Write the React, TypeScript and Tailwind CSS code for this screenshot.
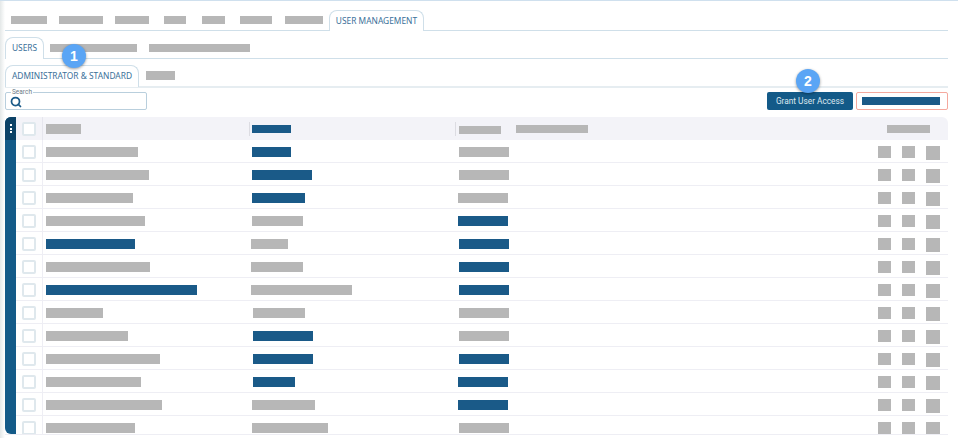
import { Search } from "lucide-react";

const BLUE = "#1a5a88";
const GREY = "#b7b7b7";

// [bar start, bar end, blue?]
type Bar = [number, number, boolean];

const rows: { name: Bar; email: Bar; role: Bar }[] = [
  { name: [46, 138, false], email: [252, 291, true], role: [459, 509, false] },
  { name: [46, 149, false], email: [252, 312, true], role: [459, 509, false] },
  { name: [46, 133, false], email: [252, 305, true], role: [458, 508, false] },
  { name: [46, 145, false], email: [252, 303, false], role: [458, 508, true] },
  { name: [46, 135, true], email: [251, 288, false], role: [459, 509, true] },
  { name: [46, 150, false], email: [251, 303, false], role: [459, 509, true] },
  { name: [46, 197, true], email: [251, 352, false], role: [459, 509, true] },
  { name: [46, 103, false], email: [253, 305, false], role: [459, 509, false] },
  { name: [46, 128, false], email: [253, 313, true], role: [459, 509, false] },
  { name: [46, 160, false], email: [253, 313, true], role: [459, 509, true] },
  { name: [46, 141, false], email: [253, 295, true], role: [458, 508, true] },
  { name: [46, 162, false], email: [252, 315, false], role: [458, 508, true] },
  { name: [46, 135, false], email: [252, 328, false], role: [459, 509, false] },
];

function Redacted({ w, blue = false, h = 10 }: { w: number; blue?: boolean; h?: number }) {
  return <div className="shrink-0" style={{ width: w, height: h, backgroundColor: blue ? BLUE : GREY }} />;
}

function Tab({ children, className = "" }: { children: React.ReactNode; className?: string }) {
  return (
    <div
      className={`flex items-center justify-center rounded-t-[8px] border border-b-0 border-[#cfdfe9] bg-white font-['Noto_Sans',sans-serif] text-[8.4px] whitespace-nowrap text-[#3a7099] ${className}`}
    >
      {children}
    </div>
  );
}

function Checkbox() {
  return <div className="h-[14px] w-[14px] rounded-[2px] border-2 border-[#dfe8ed] bg-white" />;
}

function Row({ row }: { row: (typeof rows)[number] }) {
  return (
    <div className="flex h-[23px] shrink-0 items-center border-b border-[#eeeef4] bg-white">
      <div className="flex h-full w-[27px] shrink-0 items-center justify-center border-r border-[#eeeef4] pt-[2px]">
        <Checkbox />
      </div>
      <div className="flex w-[206px] shrink-0 items-center pt-[2px]" style={{ paddingLeft: row.name[0] - 43 }}>
        <Redacted w={row.name[1] - row.name[0]} blue={row.name[2]} />
      </div>
      <div className="flex w-[206px] shrink-0 items-center pt-[2px]" style={{ paddingLeft: row.email[0] - 249 }}>
        <Redacted w={row.email[1] - row.email[0]} blue={row.email[2]} />
      </div>
      <div className="flex grow items-center pt-[2px]" style={{ paddingLeft: row.role[0] - 455 }}>
        <Redacted w={row.role[1] - row.role[0]} blue={row.role[2]} />
      </div>
      <div className="flex items-center gap-[11px] pt-[2px] pr-[8px]">
        <Redacted w={13} h={12} />
        <Redacted w={13} h={12} />
        <div className="pt-[2px]"><Redacted w={14} h={14} /></div>
      </div>
    </div>
  );
}

export default function App() {
  return (
    <div className="relative h-[438px] w-[958px] overflow-hidden border-t border-[#cfe0ee] bg-white font-['Roboto',sans-serif]">
      {/* soft shadow down the left edge */}
      <div className="absolute top-0 bottom-0 left-0 w-[5px] bg-gradient-to-r from-[#e4e8e8] to-white" />

      <div className="relative flex flex-col pr-[10px] pl-[5px]">
        {/* ── TOP TABS ─────────────────────────────────────────── */}
        <div className="mt-[9px] flex h-[21px] items-center border-b border-[#cfdfe9] pl-[6px]">
          <div className="flex items-center gap-[12px]">
            <Redacted w={36} h={8} />
            <Redacted w={44} h={8} />
            <Redacted w={34} h={8} />
          </div>
          <div className="ml-[15px]"><Redacted w={22} h={8} /></div>
          <div className="ml-[16px]"><Redacted w={23} h={8} /></div>
          <div className="ml-[15px]"><Redacted w={32} h={8} /></div>
          <div className="ml-[13px]"><Redacted w={38} h={8} /></div>
          <Tab className="ml-[6px] h-[21px] w-[95px] self-start">USER MANAGEMENT</Tab>
        </div>

        {/* ── SUB TABS ─────────────────────────────────────────── */}
        <div className="mt-[6px] flex h-[22px] items-center border-b border-[#cfdfe9]">
          <Tab className="h-[22px] w-[39px] self-start">USERS</Tab>
          <div className="ml-[6px]"><Redacted w={87} h={8} /></div>
          <div className="ml-[12px]"><Redacted w={101} h={8} /></div>
        </div>

        {/* ── ROLE TABS ────────────────────────────────────────── */}
        <div className="mt-[6px] flex h-[23px] items-center border-b-2 border-[#e6edf1]">
          <Tab className="h-[22px] w-[134px] self-start">ADMINISTRATOR &amp; STANDARD</Tab>
          <div className="ml-[7px]"><Redacted w={29} h={9} /></div>
        </div>

        {/* ── TOOLBAR ──────────────────────────────────────────── */}
        <div className="mt-[4px] flex h-[18px] items-stretch">
          <div className="relative flex w-[142px] items-center rounded-[2px] border border-[#b9cfdd] pl-[4px]">
            <span className="absolute top-[-4px] left-[5px] bg-white px-[1px] text-[6.5px] leading-[7px] text-[#6d7b85]">Search</span>
            <Search size={12} strokeWidth={3.5} className="mt-[2px] text-[#1a5a88]" />
          </div>
          <button className="ml-auto flex w-[86px] items-center justify-center rounded-[2px] bg-[#135a88] text-[8.3px] text-[#dfe9f0]">
            Grant User Access
          </button>
          <div className="ml-[3px] flex w-[92px] items-center justify-center rounded-[2px] border border-[#f5a99e] pr-[2px]">
            <Redacted w={78} h={8} blue />
          </div>
        </div>

        {/* ── TABLE ────────────────────────────────────────────── */}
        <div className="mt-[7px] flex h-[318px] overflow-hidden rounded-tr-[6px] border-b border-[#eeeef4]">
          <div className="flex w-[11px] shrink-0 flex-col overflow-hidden rounded-tl-[6px] rounded-bl-[6px] bg-[#135a88]">
            <div className="flex h-[23px] flex-col items-center justify-center gap-[1.5px] bg-[#0c4266]">
              <span className="h-[2px] w-[2px] bg-white" />
              <span className="h-[2px] w-[2px] bg-white" />
              <span className="h-[2px] w-[2px] bg-white" />
            </div>
          </div>
          <div className="flex grow flex-col">
            <div className="flex h-[23px] shrink-0 items-center bg-[#f3f3f8]">
              <div className="flex h-full w-[27px] shrink-0 items-center justify-center border-r border-[#e6e6ee]">
                <Checkbox />
              </div>
              <div className="flex h-full w-[206px] shrink-0 items-center pt-[1px] pl-[3px]">
                <Redacted w={35} />
              </div>
              <div className="flex h-[14px] w-[206px] shrink-0 items-center border-l border-[#dcdce2] pl-[2px]">
                <Redacted w={39} h={8} blue />
              </div>
              <div className="flex h-[14px] grow items-center gap-[15px] border-l border-[#dcdce2] pl-[3px]">
                <div className="mt-[3px]"><Redacted w={42} h={8} /></div>
                <div className="mt-[1px]"><Redacted w={72} h={8} /></div>
              </div>
              <div className="mt-[1px] pr-[18px]"><Redacted w={43} h={8} /></div>
            </div>
            {rows.map((row, i) => (
              <Row key={i} row={row} />
            ))}
          </div>
        </div>
      </div>

      {/* ── CALLOUT BADGES ───────────────────────────────────── */}
      <div className="absolute top-[43px] left-[62px] flex h-[24px] w-[24px] items-center justify-center rounded-full bg-[#5aa5f5] font-['Liberation_Sans',sans-serif] text-[14px] font-bold text-white shadow-[0_1px_3px_rgba(0,0,0,0.4)]">
        1
      </div>
      <div className="absolute top-[68px] left-[796px] flex h-[24px] w-[24px] items-center justify-center rounded-full bg-[#5aa5f5] font-['Liberation_Sans',sans-serif] text-[14px] font-bold text-white shadow-[0_1px_3px_rgba(0,0,0,0.4)]">
        2
      </div>
    </div>
  );
}
